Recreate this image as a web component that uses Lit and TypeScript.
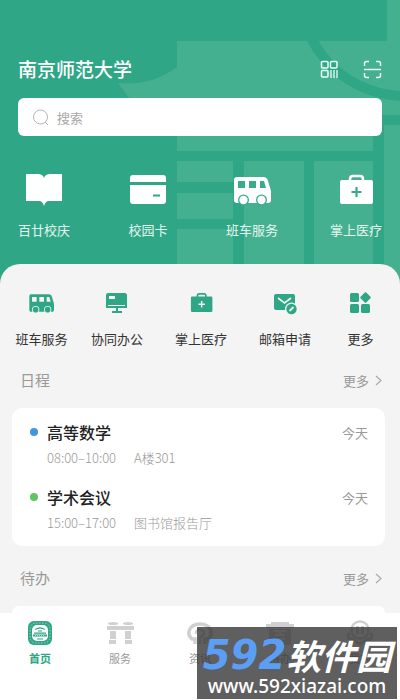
import { LitElement, html, css, svg } from "lit";
import { customElement, property } from "lit/decorators.js";

const busShape = (glass: string) => svg`
  <path fill="currentColor" d="M4 4h26c3 0 4 1 5 4l3 10v9c0 2-1 3-3 3H4c-2 0-3-1-3-3V7c0-2 1-3 3-3z"/>
  <path fill=${glass} d="M5 8h7v7H5zM16 8h7v7h-7zM27 8h4l2 7h-6z"/>
  <circle cx="10.500" cy="27" r="5.500" fill=${glass}/><circle cx="28.500" cy="27" r="5.500" fill=${glass}/>
  <circle cx="10.500" cy="27" r="4.200" fill="currentColor"/><circle cx="28.500" cy="27" r="4.200" fill="currentColor"/>`;

const kitShape = (mark: string) => svg`
  <path fill="none" stroke="currentColor" stroke-width="2.500" d="M13 8V6c0-2 1-3 3-3h7c2 0 3 1 3 3v2"/>
  <rect x="3" y="7" width="33" height="24" rx="2" fill="currentColor"/>
  <path stroke=${mark} stroke-width="2.200" d="M19.500 14v10M14.500 19h10"/>`;

const icons: Record<string, unknown> = {
  book: svg`<svg viewBox="0 0 38 34"><path fill="currentColor" d="M1 1h12c3 0 5 1 6 4 1-3 3-4 6-4h12v27H24c-3 0-4 2-5 5-1-3-2-5-5-5H1z"/></svg>`,
  card: svg`<svg viewBox="0 0 38 34"><path fill="currentColor" d="M1 9V5c0-2 1-3 3-3h30c2 0 3 1 3 3v4zM1 12h36v16c0 2-1 3-3 3H4c-2 0-3-1-3-3z"/><path stroke="#2fa686" stroke-width="2" d="M24 22.500h7"/></svg>`,
  bus: svg`<svg viewBox="0 0 38 34">${busShape("#3aab8a")}</svg>`,
  kit: svg`<svg viewBox="0 0 38 34">${kitShape("#3aab8a")}</svg>`,
  busSmall: svg`<svg viewBox="-1 -1 42 36">${busShape("#f4f4f4")}</svg>`,
  kitSmall: svg`<svg viewBox="-3 -1 43 36">${kitShape("#f4f4f4")}</svg>`,
  screen: svg`<svg viewBox="0 0 28 24"><path fill="currentColor" d="M5 2h17c1 0 2 1 2 2v13H3V4c0-1 1-2 2-2z"/><path fill="#f4f4f4" d="M6 5h6v3H6zM5 14h17v1H5z"/><path fill="currentColor" d="M13 17h2v3h4v2H9v-2h4z"/></svg>`,
  mail: svg`<svg viewBox="0 0 28 24"><rect x="3" y="3" width="21" height="16" rx="2" fill="currentColor"/><path d="M7 7l6.500 5L20 7" fill="none" stroke="#f4f4f4" stroke-width="1.600"/><circle cx="20.500" cy="18" r="6.500" fill="#f4f4f4"/><circle cx="20.500" cy="18" r="5.200" fill="currentColor"/><path d="M18.500 20l4-4" stroke="#f4f4f4" stroke-width="1.800"/></svg>`,
  grid: svg`<svg viewBox="0 0 28 24"><g fill="currentColor"><rect x="4" y="2" width="9" height="9" rx="1.500"/><rect x="4" y="13" width="9" height="9" rx="1.500"/><rect x="15" y="13" width="9" height="9" rx="1.500"/><rect x="15.500" y="2.500" width="8" height="8" rx="1" transform="rotate(45 19.500 6.500)"/></g></svg>`,
  home: svg`<svg viewBox="0 0 28 26"><rect x="2" y="1" width="24" height="24" rx="6" fill="currentColor"/><rect x="4" y="3" width="20" height="20" rx="6" fill="none" stroke="#9dd3c1" stroke-width="1" stroke-dasharray="1.500 1.500"/><rect x="6" y="5" width="16" height="16" rx="5" fill="#fff"/><g fill="currentColor"><path d="M9 9q5-3.500 10 0l-.5 1q-4.500-3-9 0zM12 10.500h4v1h-4zM8 12.500h12v1.200H8zM7 14.500h14v2H7zM11 18.500h6v1h-6z"/></g><path d="M9 15.500h10" stroke="#fff" stroke-width=".6" stroke-dasharray="1 1"/></svg>`,
  gate: svg`<svg viewBox="0 0 28 26"><g fill="currentColor"><ellipse cx="7" cy="3.500" rx="5" ry="1.500"/><ellipse cx="22" cy="3.500" rx="5" ry="1.500"/><path d="M1 6h27v4H1zM4 11h6v8H4zM19 11h6v8h-6zM3 20h7v4H3zM19 20h7v4h-7z"/></g></svg>`,
  news: svg`<svg viewBox="0 0 28 26"><path fill="none" stroke="currentColor" stroke-width="3.500" d="M9 24v-5H6C0 14 3 4 14 4s14 10 8 15h-3v5"/><path fill="none" stroke="currentColor" stroke-width="2" d="M10 14c-2-6 9-6 8 0l-4 4v6"/></svg>`,
  todo: svg`<svg viewBox="0 0 28 26"><path fill="currentColor" d="M5 2h18v2h6v4H0V4h5zM3 9h22v16H3z"/><path stroke="#fff" stroke-width="1.500" d="M7 11h14M9 15h10M9 19h10M14 11v4"/></svg>`,
  me: svg`<svg viewBox="0 0 28 26"><circle cx="14" cy="10" r="8.500" fill="none" stroke="currentColor" stroke-width="2.500"/><path stroke="currentColor" stroke-width="3" d="M11.500 6v8M16.500 6v8"/><path fill="none" stroke="currentColor" stroke-width="3" d="M4 13c-4 3-1 7 2 6l8 5 8-5c3 1 6-3 2-6"/></svg>`,
};

@customElement("section-head")
class SectionHead extends LitElement {
  @property() heading = "";

  static styles = css`
    :host { display: flex; justify-content: space-between; align-items: center; height: 24px; padding: 0 18px 0 20px; color: #999; }
    .heading { margin: 0; font-size: 15px; font-weight: 400; line-height: 24px; }
    .more { display: flex; align-items: center; gap: 6px; color: inherit; text-decoration: none; font-size: 13px; }
    .chevron { width: 7px; height: 11px; fill: none; stroke: #aaa; stroke-width: 1.2; }
  `;

  render() {
    return html`<h2 class="heading">${this.heading}</h2>
      <a class="more" href="#more">更多<svg class="chevron" viewBox="0 0 7 11"><path d="M1 1l5 4.500L1 10"/></svg></a>`;
  }
}

@customElement("app-root")
class AppRoot extends LitElement {
  static styles = css`
    :host { display: block; font-family: "Noto Sans CJK SC", sans-serif; color: #333; }
    * { box-sizing: border-box; }
    .shell { position: relative; display: flex; flex-direction: column; height: 100vh; background: #2fa686; overflow: hidden; }
    .backdrop { position: absolute; top: 0; right: 0; width: 100%; height: 284px; }
    .hero { position: relative; padding: 54px 18px 24px; color: #fff; }
    .top { display: flex; justify-content: space-between; align-items: center; height: 30px; }
    .name { margin: 0; font-size: 19px; font-weight: 500; line-height: 30px; }
    .tools { display: flex; gap: 24px; }
    button { display: flex; padding: 0; border: 0; background: none; color: inherit; font: inherit; cursor: pointer; }
    .tools svg { width: 19px; height: 19px; fill: none; stroke: #e9fff8; stroke-width: 1.5; }
    .search { display: flex; align-items: center; gap: 8px; height: 38px; margin-top: 14px; padding: 0 14px; border-radius: 6px; background: #fff; }
    .search svg { width: 17px; height: 17px; fill: none; stroke: #b5b5b5; }
    .search input { flex: 1; min-width: 0; padding: 0; border: 0; outline: 0; background: none; font: inherit; font-size: 13px; color: #333; }
    .search input::placeholder { color: #a8a8a8; opacity: 1; }
    .services { display: flex; justify-content: space-between; margin-top: 37px; }
    .tile { flex-direction: column; align-items: center; font-size: 13px; line-height: 20px; white-space: nowrap; }
    .services .tile { gap: 13px; min-width: 52px; }
    .services span { color: #e4f6f0; }
    .services svg { width: 38px; height: 34px; }
    .sheet { position: relative; flex: 1; display: flex; flex-direction: column; min-height: 0; padding-top: 27px; border-radius: 20px 20px 0 0; background: #f4f4f4; }
    .apps { display: grid; grid-template-columns: 4fr 5fr 5fr 5fr 4fr; justify-items: center; padding: 0 6px 0 8px; margin-bottom: 19px; }
    .apps .tile { gap: 14px; }
    .apps svg { width: 28px; height: 24px; color: #2fa686; }
    .card { margin: 16px 15px 20px 12px; border-radius: 10px; background: #fff; }
    .events { display: flex; flex-direction: column; gap: 17px; padding: 12px 17px 13px 18px; list-style: none; }
    .event { display: grid; grid-template-columns: 8px 1fr auto; column-gap: 9px; row-gap: 4px; align-items: center; }
    .dot { width: 8px; height: 8px; border-radius: 50%; }
    .dot.blue { background: #4496db; }
    .dot.green { background: #62c364; }
    .subject { margin: 0; font-size: 16px; font-weight: 500; line-height: 24px; color: #222; }
    .day { font-size: 13px; color: #999; }
    .detail { grid-column: 2 / 4; display: grid; grid-template-columns: 87px 1fr; font-size: 13px; font-weight: 300; line-height: 20px; color: #999; }
    .rest { flex: 1; margin-bottom: 0; border-radius: 10px 10px 0 0; }
    .nav { position: relative; display: grid; grid-template-columns: repeat(5, 1fr); height: 87px; padding-top: 7px; background: #fff; }
    .tab { display: flex; flex-direction: column; align-items: center; gap: 4px; color: #d0d0d0; text-decoration: none; font-size: 11px; line-height: 16px; }
    .tab svg { width: 28px; height: 26px; }
    .tab span { color: #999; }
    .tab.active, .tab.active span { color: #2fa686; font-weight: 700; }
    .mark { position: absolute; right: 3px; bottom: 1px; display: flex; flex-direction: column; align-items: center; width: 200px; height: 72px; padding-top: 9px; background: rgba(50, 50, 50, 0.78); color: #fff; white-space: nowrap; }
    .brand { display: flex; align-items: center; height: 38px; font-size: 35px; font-style: italic; font-weight: 700; line-height: 36px; }
    .digits { font-family: "DejaVu Sans", sans-serif; font-size: 40px; line-height: 40px; color: #5a9ff5; }
    .site { font-family: "Noto Sans", sans-serif; font-size: 19px; font-weight: 500; line-height: 24px; }
  `;

  private tile(icon: string, label: string) {
    return html`<button class="tile">${icons[icon]}<span>${label}</span></button>`;
  }

  private event(color: string, subject: string, time: string, place: string) {
    return html`<li class="event">
      <span class="dot ${color}"></span><h3 class="subject">${subject}</h3><span class="day">今天</span>
      <div class="detail"><span>${time}</span><span>${place}</span></div>
    </li>`;
  }

  private tab(icon: string, label: string, active = false) {
    return html`<a class="tab ${active ? "active" : ""}" href="#${icon}">${icons[icon]}<span>${label}</span></a>`;
  }

  render() {
    return html`<div class="shell">
      <svg class="backdrop" viewBox="0 0 400 284" preserveAspectRatio="xMaxYMin meet" aria-hidden="true">
        <g fill="#45b08f">
          <path d="M387 0h13v41h-13zM177 41h223v61H177zM177 100h196v51H177z"/>
          <path d="M118 83c22 2 42-3 59-16v43h-39z"/>
          <path d="M373 102h27v13h-27zM384 125h16v159h-16z"/>
          <path d="M177 161h56v21h-56zM177 193h56v26h-56zM177 229h56v55h-56zM244 161h60v123h-60zM314 161h59v123h-59z"/>
        </g>
        <circle cx="405" cy="-9" r="105" fill="none" stroke="#2fa686" stroke-width="10"/>
        <path fill="#45b08f" d="M387 0h13v41h-13z"/>
      </svg>
      <header class="hero">
        <div class="top">
          <h1 class="name">南京师范大学</h1>
          <div class="tools">
            <button aria-label="付款码"><svg viewBox="0 0 19 19"><rect x="1.500" y="1.500" width="6.500" height="6.500" rx="1"/><rect x="10.500" y="1.500" width="6.500" height="6.500" rx="1"/><rect x="1.500" y="10.500" width="6.500" height="6.500" rx="1"/><path d="M11 10v8M14 10v8M17 10v8" stroke-width="1.300"/></svg></button>
            <button aria-label="扫一扫"><svg viewBox="0 0 19 19"><path d="M1.500 6V3.500q0-2 2-2H6M13 1.500h2.500q2 0 2 2V6M1.500 13v2.500q0 2 2 2H6M13 17.500h2.500q2 0 2-2V13M1 9.500h17"/></svg></button>
          </div>
        </div>
        <label class="search">
          <svg viewBox="0 0 17 17"><circle cx="8.500" cy="8" r="7"/><path d="M13 13l3 3"/></svg>
          <input type="search" placeholder="搜索" aria-label="搜索">
        </label>
        <div class="services">
          ${this.tile("book", "百廿校庆")}${this.tile("card", "校园卡")}${this.tile("bus", "班车服务")}${this.tile("kit", "掌上医疗")}
        </div>
      </header>
      <main class="sheet">
        <div class="apps">
          ${this.tile("busSmall", "班车服务")}${this.tile("screen", "协同办公")}${this.tile("kitSmall", "掌上医疗")}${this.tile("mail", "邮箱申请")}${this.tile("grid", "更多")}
        </div>
        <section-head heading="日程"></section-head>
        <ul class="card events">
          ${this.event("blue", "高等数学", "08:00–10:00", "A楼301")}
          ${this.event("green", "学术会议", "15:00–17:00", "图书馆报告厅")}
        </ul>
        <section-head heading="待办"></section-head>
        <div class="card rest"></div>
      </main>
      <nav class="nav">
        ${this.tab("home", "首页", true)}${this.tab("gate", "服务")}${this.tab("news", "资讯")}${this.tab("todo", "待办")}${this.tab("me", "我的")}
      </nav>
      <aside class="mark">
        <div class="brand"><span class="digits">592</span><span>软件园</span></div>
        <div class="site">www.592xiazai.com</div>
      </aside>
    </div>`;
  }
}
